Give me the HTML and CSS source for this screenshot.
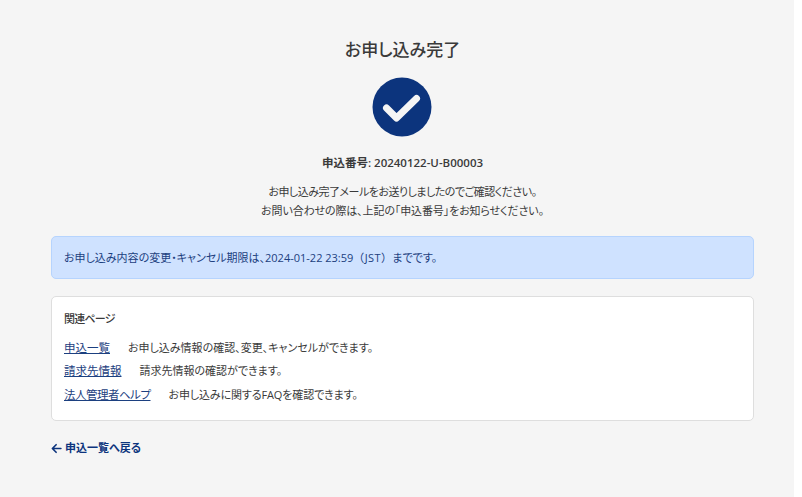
FILE: index.html
```html
<!DOCTYPE html>
<html lang="ja">
<head>
<meta charset="utf-8">
<title>お申し込み完了</title>
<link rel="stylesheet" href="styles.css">
</head>
<body>
<main class="page">
  <h1 class="title">お申し込み完了</h1>
  <svg class="check" viewBox="0 0 60 60" width="60" height="60" aria-hidden="true">
    <circle cx="30" cy="30" r="29.5" fill="#0c347d"/>
    <path d="M14.5 31 L24.5 41 L44.5 21.5" fill="none" stroke="#f5f5f5" stroke-width="7" stroke-linecap="round" stroke-linejoin="round"/>
  </svg>
  <p class="number">申込番号: 20240122-U-B00003</p>
  <p class="message"><span class="narrow">お申し込み完了メールをお送りしましたのでご確認ください。</span><br><span class="slight">お問い合わせの際は、上記の「申込番号」をお知らせください。</span></p>
  <div class="alert"><span>お申し込み内容の変更・キャンセル期限は、2024-01-22 23:59<span class="full">（JST）</span>までです。</span></div>
  <section class="card">
    <h2 class="card-title">関連ページ</h2>
    <p class="row"><a href="#">申込一覧</a><span>お申し込み情報の確認、変更、キャンセルができます。</span></p>
    <p class="row"><a href="#">請求先情報</a><span>請求先情報の確認ができます。</span></p>
    <p class="row"><a class="tight" href="#">法人管理者ヘルプ</a><span class="slight">お申し込みに関するFAQを確認できます。</span></p>
  </section>
  <a class="back" href="#">
    <svg viewBox="0 0 12 12" width="11" height="11" aria-hidden="true"><path d="M10.8 6H1.6M5.6 1.9 1.5 6l4.1 4.1" fill="none" stroke="#0c347d" stroke-width="1.8" stroke-linecap="round" stroke-linejoin="round"/></svg>
    申込一覧へ戻る
  </a>
</main>
</body>
</html>
```
FILE: styles.css
```css
* { box-sizing: border-box; }
html, body { margin: 0; background: #fff; }
body {
  width: 794px;
  height: 497px;
  overflow: hidden;
  background: #f5f5f5;
  color: #3a3a3a;
  font: 11px/1.5 "Open Sans", "Noto Sans CJK JP", sans-serif;
  font-feature-settings: "palt";
}
.page { padding: 36px 40px 0 51px; display: flex; flex-direction: column; }
.title { margin: 0; font-size: 17px; line-height: 28px; font-weight: 500; text-align: center; }
.check { align-self: center; margin-top: 13px; transform: translateX(-1px); }
.number { margin: 17px 0 0; font-size: 11.5px; line-height: 18px; font-weight: 600; text-align: center; }
.message { margin: 10px 0 0; line-height: 19px; text-align: center; }
.narrow { letter-spacing: -0.5px; }
.slight { letter-spacing: -0.12px; }
.alert {
  margin-top: 16px; height: 43px; padding: 1px 12px 0 12px; display: flex; align-items: center;
  background: #cfe2ff; border: 1px solid #b6d4fe; border-radius: 5px; color: #1c4080;
}
.full { font-feature-settings: normal; letter-spacing: 0.4px; }
.card {
  margin-top: 17px; height: 125px; padding: 13px 12px 12px; background: #fff;
  border: 1px solid #dedede; border-radius: 5px;
}
.card-title { margin: 0 0 10.5px; font-size: 11px; line-height: 18px; font-weight: 500; letter-spacing: -0.8px; }
.row { margin: 0 0 5px; line-height: 18.5px; }
.row a { color: #1c4080; margin-right: 18px; font-size: 11.5px; }
.row a.tight { letter-spacing: -0.5px; }
.back { margin-top: 18px; display: flex; align-items: center; gap: 3px; color: #0c347d; font-weight: 600; text-decoration: none; line-height: 18px; }
```
